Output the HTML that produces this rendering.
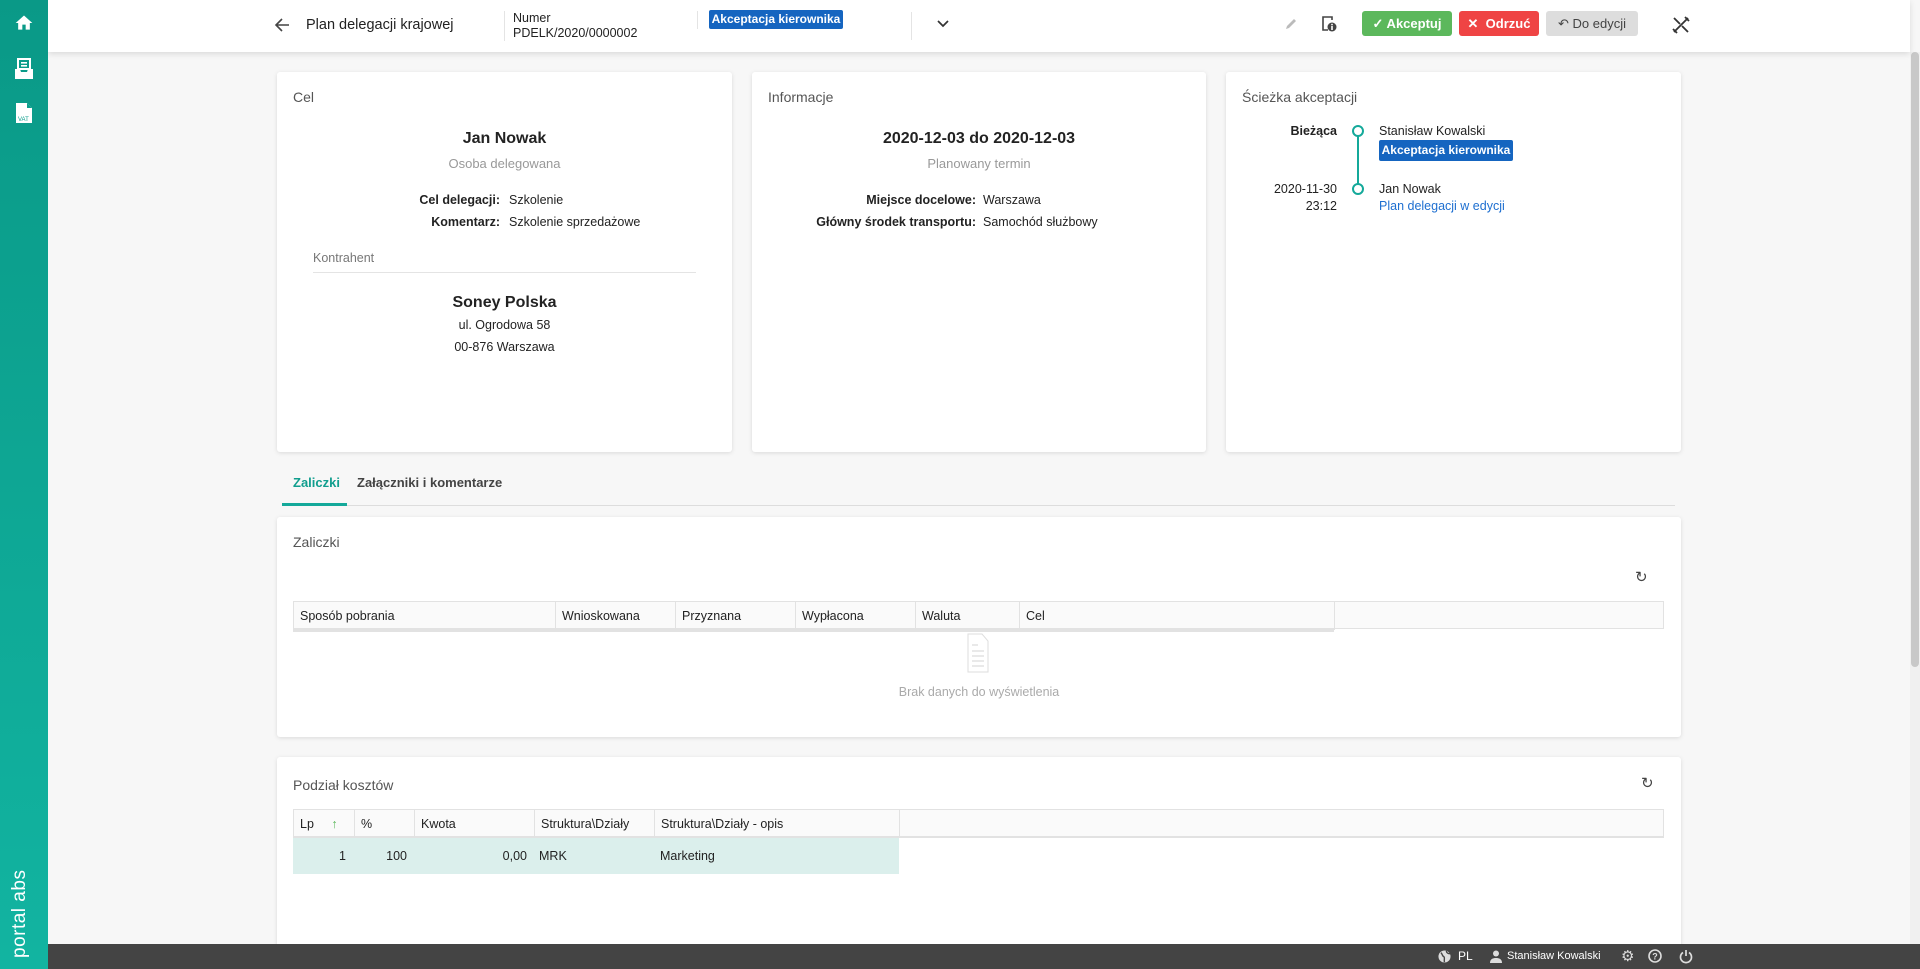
<!DOCTYPE html>
<html><head><meta charset="utf-8"><style>
*{box-sizing:border-box;margin:0;padding:0}
body{width:1920px;height:969px;overflow:hidden;background:#f7f7f7;font-family:"Liberation Sans",sans-serif;color:#222;position:relative;font-size:13px}
.a{position:absolute;white-space:nowrap}
.side{left:0;top:0;width:48px;height:969px;background:linear-gradient(#0a9987,#12b4a1);z-index:5}
.top{left:48px;top:0;width:1862px;height:52px;background:#fff;box-shadow:0 2px 6px rgba(0,0,0,.12);z-index:3}
.card{background:#fff;border-radius:3px;box-shadow:0 1px 4px rgba(0,0,0,.12)}
.ttl{font-size:14px;color:#555}
.sep{width:1px;background:#e4e4e4}
.btn{height:25px;border-radius:3px;font-size:13px;font-weight:bold;line-height:25px;color:#fff;text-align:center}
.badge{background:#1565c0;color:#fff;font-weight:bold;font-size:12px;border-radius:2px;text-align:center}
.th{position:absolute;top:0;height:28px;line-height:28px;padding-left:6px;font-size:12.5px;border-right:1px solid #e2e2e2;color:#222}
.c{text-align:center}
.g{color:#999}
</style></head><body>
<div class="a side">
<svg class="a" style="left:13px;top:13px" width="22" height="20" viewBox="0 0 24 24"><path d="M10 20v-6h4v6h5v-8h3L12 3 2 12h3v8z" fill="#fff"/></svg>
<svg class="a" style="left:14px;top:58px" width="20" height="22" viewBox="0 0 20 22"><rect x="4" y="1" width="12" height="10" fill="none" stroke="#fff" stroke-width="2"/><rect x="7" y="4" width="6" height="1.6" fill="#fff"/><rect x="7" y="7" width="6" height="1.6" fill="#fff"/><path d="M1 11h5l1 3h6l1-3h5v10H1z" fill="#fff"/></svg>
<svg class="a" style="left:15px;top:102px" width="18" height="22" viewBox="0 0 18 22"><path d="M1 1h11l5 5v15H1z" fill="#fff"/><path d="M12 1v5h5" fill="#0c9e8c"/><text x="3" y="19" font-size="6" fill="#0c9e8c" font-family="Liberation Sans">VAT</text></svg>
<div class="a" style="left:9px;top:958px;transform:rotate(-90deg);transform-origin:0 0;color:#fff;font-size:19px;letter-spacing:.5px">portal abs</div>
</div>
<div class="a top">
<svg class="a" style="left:226px;top:17px" width="16" height="16" viewBox="0 0 16 16"><path d="M15 8H2M8 2L2 8l6 6" stroke="#444" stroke-width="1.6" fill="none"/></svg>
<div class="a" style="left:258px;top:17px;font-size:14.5px">Plan delegacji krajowej</div>
<div class="a sep" style="left:456px;top:11px;height:30px"></div>
<div class="a" style="left:465px;top:11px;font-size:12.5px">Numer</div>
<div class="a" style="left:465px;top:26px;font-size:12.5px">PDELK/2020/0000002</div>
<div class="a sep" style="left:649px;top:11px;height:18px"></div>
<div class="a badge" style="left:661px;top:10px;width:134px;height:19px;line-height:19px">Akceptacja kierownika</div>
<div class="a sep" style="left:863px;top:12px;height:28px"></div>
<svg class="a" style="left:888px;top:19px" width="14" height="10" viewBox="0 0 14 10"><path d="M2 2l5 5 5-5" stroke="#333" stroke-width="1.7" fill="none"/></svg>
<svg class="a" style="left:1235px;top:16px" width="16" height="16" viewBox="0 0 16 16"><path d="M3 13l1-3 7-7 2 2-7 7z" fill="#bbb"/></svg>
<svg class="a" style="left:1273px;top:15px" width="16" height="17" viewBox="0 0 16 17"><path d="M11 5V2H2v13h5" stroke="#444" stroke-width="1.6" fill="none"/><circle cx="11" cy="12" r="4.5" fill="#444"/><rect x="10.2" y="11" width="1.6" height="4" fill="#fff"/><rect x="10.2" y="8.8" width="1.6" height="1.5" fill="#fff"/></svg>
<div class="a btn" style="left:1314px;top:11px;width:90px;background:#5cb85c">&#10003; Akceptuj</div>
<div class="a btn" style="left:1411px;top:11px;width:80px;background:#ef4444">&#10005;&nbsp; Odrzuć</div>
<div class="a btn" style="left:1498px;top:11px;width:92px;background:#ddd;color:#444;font-weight:normal">&#8630; Do edycji</div>
<svg class="a" style="left:1624px;top:16px" width="18" height="18" viewBox="0 0 18 18"><path d="M2 16L16 2M2 2l6 6M10 10l6 6M13 1l4 4M1 13l4 4" stroke="#333" stroke-width="1.8" fill="none"/></svg>
</div>
<div class="a" style="left:1910px;top:52px;width:10px;height:892px;background:#f0f0f0"></div>
<div class="a" style="left:1911px;top:52px;width:8px;height:615px;background:#c8c8c8;border-radius:4px"></div>

<div class="a card" style="left:277px;top:72px;width:455px;height:380px">
<div class="a ttl" style="left:16px;top:17px">Cel</div>
<div class="a c" style="left:0;width:455px;top:58px;font-size:16px;font-weight:bold">Jan Nowak</div>
<div class="a c g" style="left:0;width:455px;top:84px;font-size:13px">Osoba delegowana</div>
<div class="a" style="right:232px;top:121px;font-weight:bold;font-size:12.5px">Cel delegacji:</div>
<div class="a" style="left:232px;top:121px;font-size:12.5px">Szkolenie</div>
<div class="a" style="right:232px;top:143px;font-weight:bold;font-size:12.5px">Komentarz:</div>
<div class="a" style="left:232px;top:143px;font-size:12.5px">Szkolenie sprzedażowe</div>
<div class="a" style="left:36px;top:179px;color:#777;font-size:12.5px">Kontrahent</div>
<div class="a" style="left:36px;top:200px;width:383px;height:1px;background:#e4e4e4"></div>
<div class="a c" style="left:0;width:455px;top:222px;font-size:16px;font-weight:bold">Soney Polska</div>
<div class="a c" style="left:0;width:455px;top:246px;font-size:12.5px">ul. Ogrodowa 58</div>
<div class="a c" style="left:0;width:455px;top:268px;font-size:12.5px">00-876 Warszawa</div>
</div>

<div class="a card" style="left:752px;top:72px;width:454px;height:380px">
<div class="a ttl" style="left:16px;top:17px">Informacje</div>
<div class="a c" style="left:0;width:454px;top:58px;font-size:16px;font-weight:bold">2020-12-03 do 2020-12-03</div>
<div class="a c g" style="left:0;width:454px;top:84px">Planowany termin</div>
<div class="a" style="right:230px;top:121px;font-weight:bold;font-size:12.5px">Miejsce docelowe:</div>
<div class="a" style="left:231px;top:121px;font-size:12.5px">Warszawa</div>
<div class="a" style="right:230px;top:143px;font-weight:bold;font-size:12.5px">Główny środek transportu:</div>
<div class="a" style="left:231px;top:143px;font-size:12.5px">Samochód służbowy</div>
</div>

<div class="a card" style="left:1226px;top:72px;width:455px;height:380px">
<div class="a ttl" style="left:16px;top:17px">Ścieżka akceptacji</div>
<div class="a" style="right:344px;top:52px;font-weight:bold;font-size:12.5px">Bieżąca</div>
<div class="a" style="left:131px;top:59px;width:2px;height:58px;background:#14a99a"></div>
<div class="a" style="left:126px;top:53px;width:12px;height:12px;border:2px solid #14a99a;border-radius:50%;background:#fff"></div>
<div class="a" style="left:126px;top:111px;width:12px;height:12px;border:2px solid #14a99a;border-radius:50%;background:#fff"></div>
<div class="a" style="left:153px;top:52px;font-size:12.5px">Stanisław Kowalski</div>
<div class="a badge" style="left:153px;top:68px;width:134px;height:21px;line-height:21px">Akceptacja kierownika</div>
<div class="a" style="right:344px;top:110px;font-size:12.5px">2020-11-30</div>
<div class="a" style="right:344px;top:127px;font-size:12.5px">23:12</div>
<div class="a" style="left:153px;top:110px;font-size:12.5px">Jan Nowak</div>
<div class="a" style="left:153px;top:127px;font-size:12.5px;color:#1e6fd0">Plan delegacji w edycji</div>
</div>

<div class="a" style="left:293px;top:475px;font-size:13px;color:#119e8e;font-weight:bold">Zaliczki</div>
<div class="a" style="left:357px;top:475px;font-size:13px;color:#444;font-weight:bold">Załączniki i komentarze</div>
<div class="a" style="left:282px;top:505px;width:1393px;height:1px;background:#ddd"></div>
<div class="a" style="left:282px;top:503px;width:65px;height:3px;background:#14a99a"></div>

<div class="a card" style="left:277px;top:517px;width:1404px;height:220px">
<div class="a ttl" style="left:16px;top:17px">Zaliczki</div>
<div class="a" style="left:1358px;top:51px;font-size:15px;color:#444">&#8635;</div>
<div class="a" style="left:16px;top:84px;width:1371px;height:28px;background:#fafafa;border:1px solid #e2e2e2">
<div class="th" style="left:0;width:262px">Sposób pobrania</div>
<div class="th" style="left:262px;width:120px">Wnioskowana</div>
<div class="th" style="left:382px;width:120px">Przyznana</div>
<div class="th" style="left:502px;width:120px">Wypłacona</div>
<div class="th" style="left:622px;width:104px">Waluta</div>
<div class="th" style="left:726px;width:315px">Cel</div>
</div>
<div class="a" style="left:16px;top:112px;width:1041px;height:3px;background:#e2e2e2"></div>
<svg class="a" style="left:690px;top:116px" width="22" height="40" viewBox="0 0 22 40"><path d="M1 1h14l6 7v31H1z" fill="#fff" stroke="#ddd"/><path d="M5 12h6M5 18h12M5 23h12M5 28h12M5 33h12" stroke="#e2e2e2" stroke-width="1.5"/></svg>
<div class="a c" style="left:0;width:1404px;top:168px;color:#aaa;font-size:12.5px">Brak danych do wyświetlenia</div>
</div>

<div class="a card" style="left:277px;top:757px;width:1404px;height:200px">
<div class="a ttl" style="left:16px;top:20px">Podział kosztów</div>
<div class="a" style="left:1364px;top:17px;font-size:15px;color:#444">&#8635;</div>
<div class="a" style="left:16px;top:52px;width:1371px;height:29px;background:#fafafa;border:1px solid #e2e2e2;border-bottom:2px solid #e2e2e2">
<div class="th" style="left:0;width:61px">Lp <span style="color:#5cb85c;margin-left:14px">&#8593;</span></div>
<div class="th" style="left:61px;width:60px">%</div>
<div class="th" style="left:121px;width:120px">Kwota</div>
<div class="th" style="left:241px;width:120px">Struktura\Działy</div>
<div class="th" style="left:361px;width:245px">Struktura\Działy - opis</div>
</div>
<div class="a" style="left:16px;top:81px;width:606px;height:36px;background:#dbefec;font-size:12.5px;line-height:36px">
<div class="a" style="right:553px">1</div>
<div class="a" style="right:492px">100</div>
<div class="a" style="right:372px">0,00</div>
<div class="a" style="left:246px">MRK</div>
<div class="a" style="left:367px">Marketing</div>
</div>
</div>

<div class="a" style="left:48px;top:944px;width:1872px;height:25px;background:#444;z-index:4;color:#fff;font-size:12px;line-height:25px">
<svg class="a" style="left:1390px;top:6px" width="13" height="13" viewBox="0 0 14 14"><circle cx="7" cy="7" r="6.5" fill="#ddd"/><path d="M3 3c2 1 1 3 3 4s0 4 1 6M9 1c0 2 2 3 4 3" stroke="#444" stroke-width="1.5" fill="none"/></svg>
<div class="a" style="left:1410px">PL</div>
<svg class="a" style="left:1442px;top:6px" width="12" height="13" viewBox="0 0 12 13"><circle cx="6" cy="3.5" r="3" fill="#ddd"/><path d="M0 13c0-4 3-5 6-5s6 1 6 5z" fill="#ddd"/></svg>
<div class="a" style="left:1459px;font-size:11px">Stanisław Kowalski</div>
<div class="a" style="left:1573px;font-size:15px;color:#ddd">&#9881;</div>
<svg class="a" style="left:1600px;top:5px" width="14" height="14" viewBox="0 0 14 14"><circle cx="7" cy="7" r="6" stroke="#ddd" stroke-width="1.6" fill="none"/><text x="4.3" y="10.5" font-size="9" fill="#ddd" font-family="Liberation Sans" font-weight="bold">?</text></svg>
<svg class="a" style="left:1631px;top:5px" width="14" height="15" viewBox="0 0 14 15"><path d="M4 3.5A5.5 5.5 0 1 0 10 3.5M7 1v6" stroke="#ddd" stroke-width="1.7" fill="none"/></svg>
</div>
</body></html>
